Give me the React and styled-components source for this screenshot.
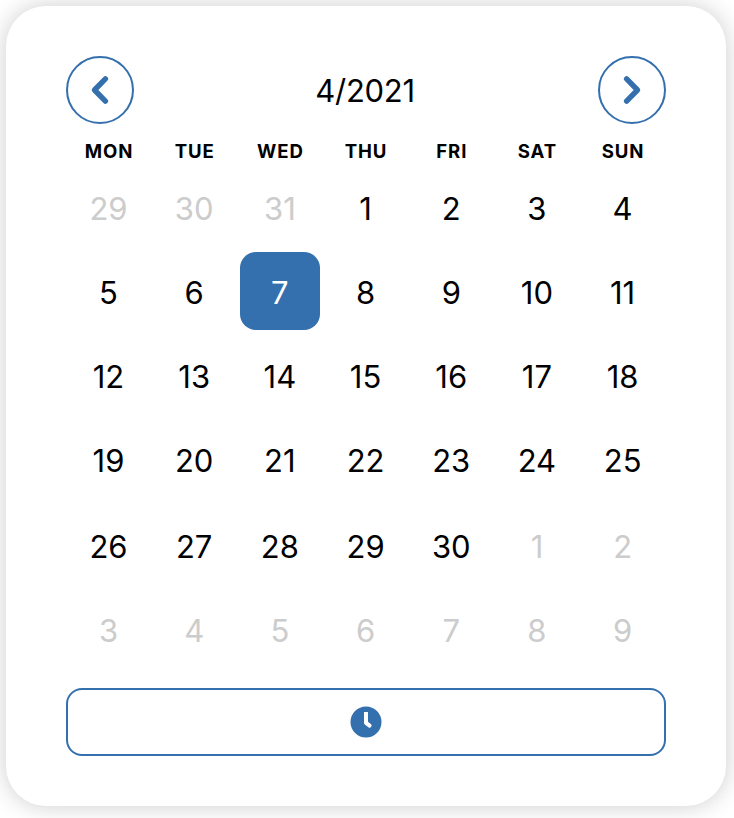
import React from "react";
import styled, { createGlobalStyle } from "styled-components";

const Global = createGlobalStyle`
  * { box-sizing: border-box; }
  html, body { margin: 0; background: #fff; }
  body { font-family: Inter, "Liberation Sans", sans-serif; color: #000; overflow: hidden; }
  button { font: inherit; padding: 0; margin: 0; }
`;

const Page = styled.main`
  width: 734px;
  height: 818px;
  padding: 6px 8px 12px 6px;
  overflow: hidden;
`;

const Card = styled.section`
  height: 800px;
  padding: 50px 60px;
  border-radius: 40px;
  background: #fff;
  box-shadow: 0 0 24px rgba(0, 0, 0, 0.2);
`;

const Header = styled.header`
  display: flex;
  align-items: center;
  justify-content: space-between;
  height: 68px;
`;

const NavButton = styled.button`
  display: grid;
  place-items: center;
  width: 68px;
  height: 68px;
  border: 2px solid #3470ae;
  border-radius: 50%;
  background: #fff;
`;

const Title = styled.h1`
  margin: 0;
  padding: 2px 2px 0 0;
  font-size: 31px;
  font-weight: 400;
  line-height: 40px;
  letter-spacing: -0.3px;
`;

const Weekdays = styled.div`
  display: grid;
  grid-template-columns: repeat(7, 80px);
  column-gap: 5.7px;
  height: 44px;
  padding: 15px 0 0 3px;
`;

const Weekday = styled.span`
  font-size: 18.6px;
  font-weight: 650;
  line-height: 24px;
  text-align: center;
  letter-spacing: 0.9px;
`;

const Days = styled.div`
  display: grid;
  grid-template-columns: repeat(7, 80px);
  grid-template-rows: 78px 78px 78px 80px 78px 78px;
  align-items: start;
  column-gap: 5.7px;
  row-gap: 6px;
  padding-left: 3px;
`;

const Day = styled.button`
  height: 78px;
  padding: 4px 1px 0 0;
  border: 0;
  border-radius: 16px;
  font-size: 31px;
  line-height: 74px;
  text-align: center;
  color: ${({ $muted, $selected }) => ($selected ? "#fff" : $muted ? "#ccc" : "#000")};
  background: ${({ $selected }) => ($selected ? "#3470ae" : "transparent")};
`;

const TimeButton = styled.button`
  display: grid;
  place-items: center;
  width: 100%;
  height: 68px;
  margin-top: 20px;
  border: 2px solid #3470ae;
  border-radius: 16px;
  background: #fff;
`;

const names = ["MON", "TUE", "WED", "THU", "FRI", "SAT", "SUN"];
const days = [
  ...[29, 30, 31].map((n) => ({ n, muted: true })),
  ...Array.from({ length: 30 }, (_, i) => ({ n: i + 1, selected: i === 6 })),
  ...Array.from({ length: 9 }, (_, i) => ({ n: i + 1, muted: true })),
];

const Chevron = ({ right }) => (
  <svg width="32" height="32" viewBox="0 0 32 32" fill="none" stroke="#3470ae" strokeWidth="5.4" strokeLinecap="round" strokeLinejoin="round">
    <path d={right ? "M10.6 4.9 21.5 16 10.6 27.1" : "M21.4 4.9 10.5 16 21.4 27.1"} />
  </svg>
);

export default function App() {
  return (
    <Page>
      <Global />
      <Card>
        <Header>
          <NavButton aria-label="Previous month"><Chevron /></NavButton>
          <Title>4/2021</Title>
          <NavButton aria-label="Next month"><Chevron right /></NavButton>
        </Header>
        <Weekdays>{names.map((n) => <Weekday key={n}>{n}</Weekday>)}</Weekdays>
        <Days>
          {days.map((d, i) => <Day key={i} $muted={d.muted} $selected={d.selected}>{d.n}</Day>)}
        </Days>
        <TimeButton aria-label="Select time">
          <svg width="32" height="32" viewBox="0 0 32 32" fill="none">
            <circle cx="16" cy="16" r="15.5" fill="#3470ae" />
            <path d="M16 6V17" stroke="#fff" strokeWidth="4" />
            <path d="M16 16.8 19.6 19.6" stroke="#fff" strokeWidth="4" strokeLinecap="round" />
          </svg>
        </TimeButton>
      </Card>
    </Page>
  );
}
